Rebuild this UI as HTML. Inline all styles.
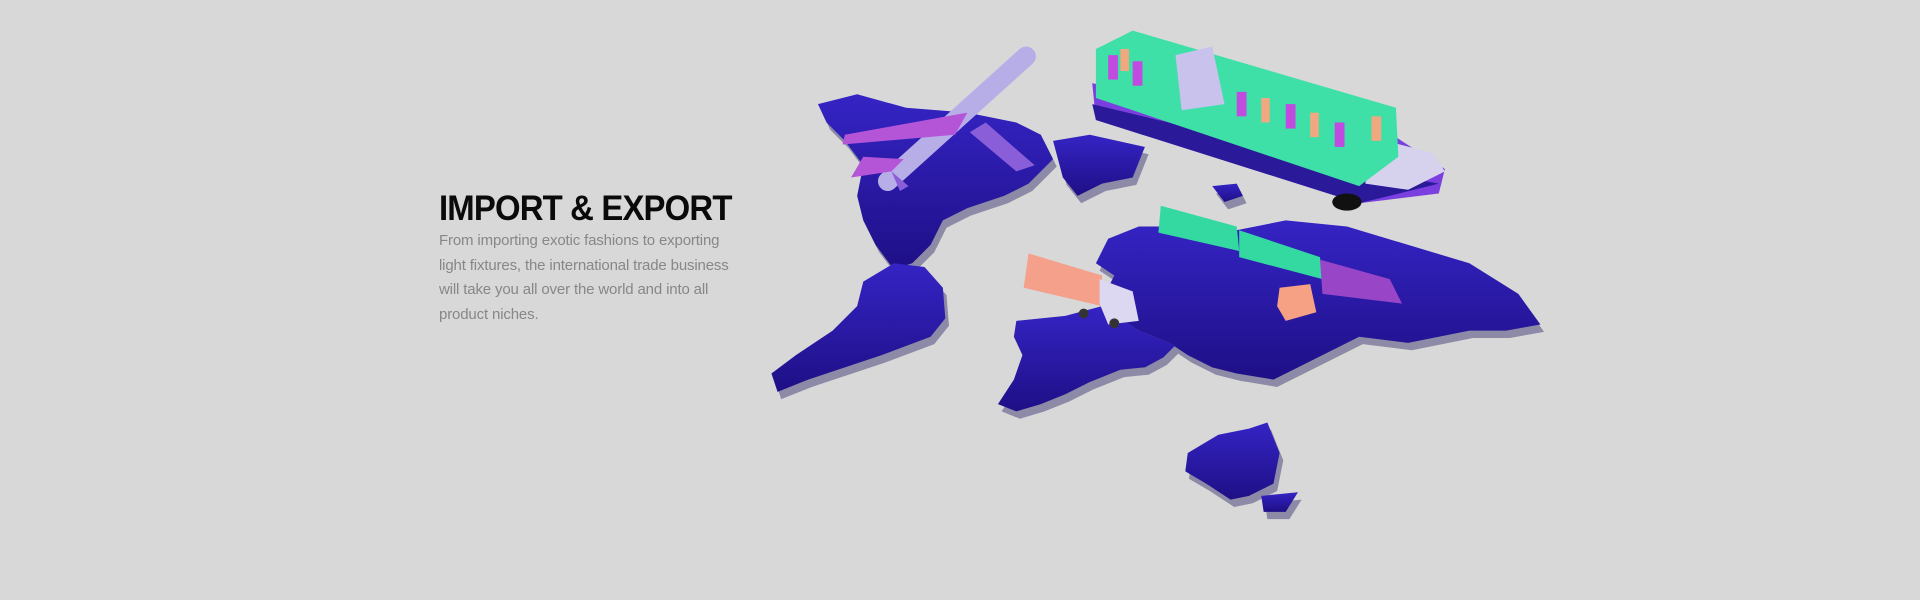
<!DOCTYPE html>
<html><head><meta charset="utf-8"><style>
html,body{margin:0;padding:0;}
body{width:1920px;height:600px;background:#d8d8d8;position:relative;overflow:hidden;font-family:"Liberation Sans",sans-serif;}
h1{position:absolute;left:439px;top:189px;margin:0;font-size:35px;font-weight:bold;color:#0a0a0a;letter-spacing:-0.9px;white-space:nowrap;transform:scaleX(0.94);transform-origin:left;}
p{position:absolute;left:439px;top:229px;margin:0;font-size:15px;line-height:24.5px;color:#878787;white-space:nowrap;letter-spacing:-0.15px;}
svg{position:absolute;left:0;top:0;}
</style></head><body>
<h1>IMPORT &amp; EXPORT</h1>
<p>From importing exotic fashions to exporting<br>light fixtures, the international trade business<br>will take you all over the world and into all<br>product niches.</p>
<svg width="1920" height="600" viewBox="0 0 1568 490">
<defs>
<linearGradient id="g" x1="0" y1="0" x2="0" y2="1"><stop offset="0" stop-color="#3524c4"/><stop offset="1" stop-color="#1e0f86"/></linearGradient>
<g id="land">
<polygon points="668,85 700,77 740,88 790,92 830,100 850,110 860,130 840,150 820,160 790,170 770,180 760,200 745,215 730,220 715,200 705,180 700,160 705,135 690,115 675,100"/>
<polygon points="860,115 890,110 935,120 925,145 900,150 880,160 868,145"/>
<polygon points="730,215 755,218 770,235 772,260 760,275 720,290 690,300 660,310 635,320 630,305 650,290 680,270 700,250 705,230"/>
<polygon points="905,195 930,185 960,185 1000,190 1050,180 1100,185 1150,200 1200,215 1240,240 1258,265 1230,270 1200,270 1175,275 1150,280 1110,275 1080,290 1060,300 1040,310 1010,305 990,300 970,290 955,280 930,270 915,260 900,245 910,225 895,215"/>
<polygon points="830,262 870,258 900,250 930,270 960,282 950,292 935,300 915,302 890,312 870,322 850,330 830,336 815,330 828,310 835,290 828,275"/>
<polygon points="970,370 995,355 1020,350 1035,345 1045,370 1040,395 1020,405 1005,408 985,395 968,385"/>
<polygon points="990,152 1010,150 1015,160 1000,165"/>
<polygon points="1030,405 1060,402 1050,418 1032,418"/>
</g>
</defs>
<use href="#land" fill="#8c8aa6" transform="translate(3,6)"/>
<use href="#land" fill="url(#g)"/>
<polygon points="892,68 1140,112 1180,138 1175,158 1110,166 895,98" fill="#7b3fe0"/>
<polygon points="892,85 1120,140 1175,150 1110,166 895,98" fill="#2a1a9a"/>
<polygon points="1120,112 1170,125 1180,140 1150,155 1115,150" fill="#d6d2ee"/>
<polygon points="895,40 925,25 1140,88 1142,128 1110,152 895,80" fill="#3ee0a8"/>
<g fill="#c14be0"><rect x="905" y="45" width="8" height="20"/><rect x="925" y="50" width="8" height="20"/><rect x="1010" y="75" width="8" height="20"/><rect x="1050" y="85" width="8" height="20"/><rect x="1090" y="100" width="8" height="20"/></g>
<g fill="#f0a880"><rect x="915" y="40" width="7" height="18"/><rect x="1030" y="80" width="7" height="20"/><rect x="1070" y="92" width="7" height="20"/><rect x="1120" y="95" width="8" height="20"/></g>
<polygon points="960,45 990,38 1000,85 965,90" fill="#c8c2ec"/>
<ellipse cx="1100" cy="165" rx="12" ry="7" fill="#111"/>
<path d="M838,46 L725,148" stroke="#b7aee8" stroke-width="16" stroke-linecap="round"/>
<polygon points="790,92 690,110 688,118 780,110" fill="#b455d8"/>
<polygon points="805,100 845,135 830,140 792,108" fill="#8a5ed8"/>
<polygon points="738,130 705,128 695,145 728,140" fill="#b455d8"/>
<polygon points="728,140 742,152 735,156" fill="#8a5ed8"/>
<polygon points="840,207 900,225 900,250 836,235" fill="#f5a08a"/>
<polygon points="898,228 925,238 930,262 905,265 898,248" fill="#dcd8f2"/>
<circle cx="885" cy="256" r="4" fill="#333"/><circle cx="910" cy="264" r="4" fill="#333"/>
<polygon points="948,168 1010,185 1012,205 946,190" fill="#34d9a2"/>
<polygon points="1012,188 1078,210 1080,228 1012,210" fill="#34d9a2"/>
<polygon points="1078,212 1135,228 1145,248 1080,240" fill="#9845c8"/>
<polygon points="1045,235 1070,232 1075,255 1050,262 1043,250" fill="#f6a184"/>
</svg>
</body></html>
